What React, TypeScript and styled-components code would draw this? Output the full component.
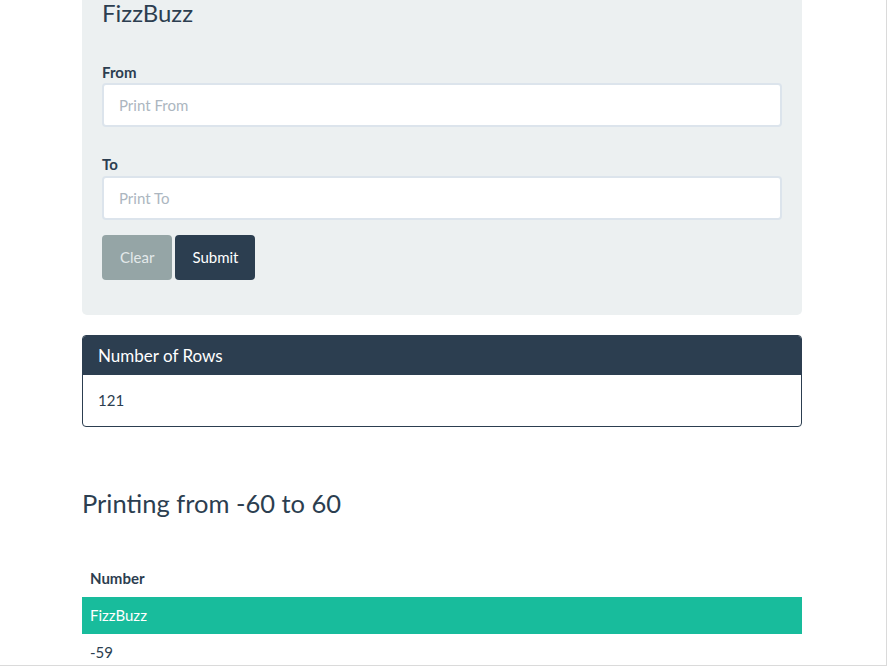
import styled, { createGlobalStyle } from "styled-components";

const GlobalStyle = createGlobalStyle`
  html, body {
    margin: 0;
    padding: 0;
    background: #fff;
  }
  body {
    font-family: Lato, "Open Sans", sans-serif;
    font-size: 15px;
    color: #2c3e50;
  }
  * {
    box-sizing: border-box;
  }
`;

const Frame = styled.div`
  width: 887px;
  height: 666px;
  border-right: 1px solid #dadada;
  border-bottom: 1px solid #dadada;
  overflow: hidden;
`;

const Container = styled.div`
  width: 720px;
  margin-left: 82px;
`;

const Jumbotron = styled.div`
  background: #ecf0f1;
  border-radius: 0 0 5px 5px;
  padding: 0 20px 35px;
`;

const Title = styled.h1`
  margin: -1px 0 0;
  font-size: 24px;
  font-weight: 400;
  line-height: 1.2;
`;

const Field = styled.div<{ gap: number }>`
  display: flex;
  flex-direction: column;
  margin-top: ${({ gap }) => gap}px;
`;

const Label = styled.label`
  font-weight: 700;
  font-size: 15px;
  line-height: 22.5px;
`;

const Input = styled.input`
  height: 44px;
  width: 100%;
  border: 2px solid #dce4ec;
  border-radius: 4px;
  background: #fff;
  padding: 0 15px;
  font-family: inherit;
  font-size: 15px;
  color: #2c3e50;
  outline: none;
  &::placeholder {
    color: #acb6c0;
  }
`;

const Actions = styled.div`
  display: flex;
  gap: 3px;
  margin-top: 15px;
`;

const Button = styled.button<{ tone: "muted" | "primary" }>`
  all: unset;
  height: 45px;
  line-height: 45px;
  padding: 0 ${({ tone }) => (tone === "muted" ? 18 : 17)}px;
  border-radius: 4px;
  font-family: Lato, sans-serif;
  font-size: 15px;
  cursor: pointer;
  background: ${({ tone }) => (tone === "muted" ? "#95a5a6" : "#2c3e50")};
  color: ${({ tone }) => (tone === "muted" ? "#e3e9ea" : "#fff")};
`;

const Panel = styled.div`
  margin-top: 20px;
  border: 1px solid #2c3e50;
  border-radius: 4px;
  overflow: hidden;
`;

const PanelHeading = styled.div`
  background: #2c3e50;
  color: #fff;
  padding: 10px 15px;
  font-size: 17px;
  line-height: 19px;
`;

const PanelBody = styled.div`
  padding: 15px;
  line-height: 21px;
`;

const Heading = styled.h3`
  margin: 62px 0 0;
  font-size: 25.5px;
  font-weight: 400;
  line-height: 29.7px;
`;

const Table = styled.table`
  width: 100%;
  margin-top: 41px;
  border-collapse: collapse;
`;

const Th = styled.th`
  text-align: left;
  font-weight: 700;
  padding: 8px;
  line-height: 21px;
`;

const Td = styled.td<{ fizz?: boolean }>`
  padding: 8px;
  line-height: 21px;
  background: ${({ fizz }) => (fizz ? "#18bc9c" : "transparent")};
  color: ${({ fizz }) => (fizz ? "#fff" : "#2c3e50")};
`;

function fizzBuzz(n: number): string {
  if (n % 15 === 0) return "FizzBuzz";
  if (n % 3 === 0) return "Fizz";
  if (n % 5 === 0) return "Buzz";
  return String(n);
}

export default function App() {
  const from = -60;
  const to = 60;
  const rows: number[] = [];
  for (let i = from; i <= to; i++) rows.push(i);

  return (
    <>
      <GlobalStyle />
      <Frame>
        <Container>
          <Jumbotron>
            <Title>FizzBuzz</Title>
            <Field gap={33}>
              <Label>From</Label>
              <Input placeholder="Print From" />
            </Field>
            <Field gap={26}>
              <Label>To</Label>
              <Input placeholder="Print To" />
            </Field>
            <Actions>
              <Button tone="muted">Clear</Button>
              <Button tone="primary">Submit</Button>
            </Actions>
          </Jumbotron>

          <Panel>
            <PanelHeading>Number of Rows</PanelHeading>
            <PanelBody>{rows.length}</PanelBody>
          </Panel>

          <Heading>
            Printing from {from} to {to}
          </Heading>

          <Table>
            <thead>
              <tr>
                <Th>Number</Th>
              </tr>
            </thead>
            <tbody>
              {rows.map((n) => {
                const value = fizzBuzz(n);
                return (
                  <tr key={n}>
                    <Td fizz={value === "FizzBuzz"}>{value}</Td>
                  </tr>
                );
              })}
            </tbody>
          </Table>
        </Container>
      </Frame>
    </>
  );
}
